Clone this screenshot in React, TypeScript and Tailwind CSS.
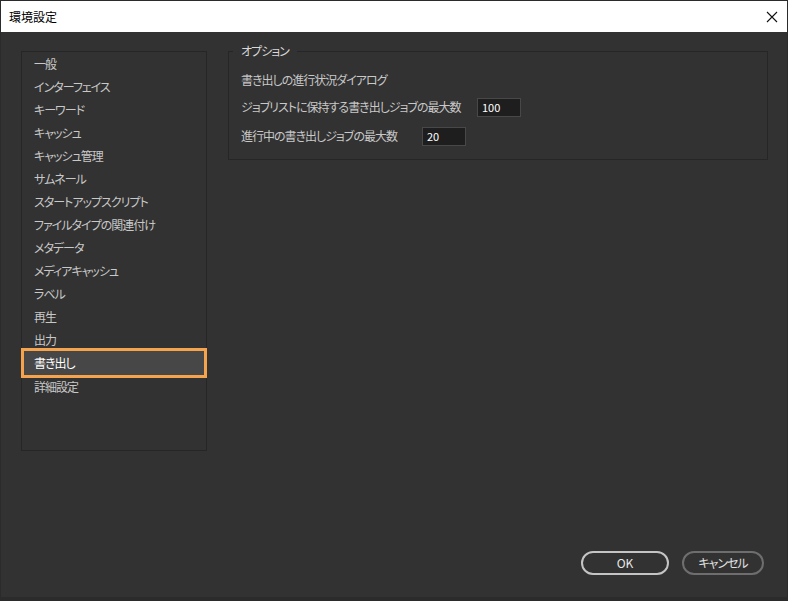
import React from "react";

const items = [
  "一般",
  "インターフェイス",
  "キーワード",
  "キャッシュ",
  "キャッシュ管理",
  "サムネール",
  "スタートアップスクリプト",
  "ファイルタイプの関連付け",
  "メタデータ",
  "メディアキャッシュ",
  "ラベル",
  "再生",
  "出力",
  "書き出し",
  "詳細設定",
];

export default function App() {
  return (
    <div
      className="w-[788px] h-[601px] bg-[#2b2b2b] flex flex-col overflow-hidden text-[12px] [font-feature-settings:'palt'] whitespace-nowrap"
      style={{ fontFamily: '"Noto Sans CJK JP", "Noto Sans", sans-serif' }}
    >
      <div className="mt-[1px] mx-[1px] h-[31px] bg-white flex items-center justify-between pl-[8px] pr-[9px] text-black">
        <span className="text-[12px]">環境設定</span>
        <svg width="12" height="12" viewBox="0 0 12 12">
          <path d="M1 1 L11 11 M11 1 L1 11" stroke="#111" strokeWidth="1.1" />
        </svg>
      </div>
      <div className="flex-1 bg-[#323232] flex flex-col mx-[1px] mb-[4px] tracking-[-1px]">
        <div className="flex pt-[19px] pl-[20px]">
          <div className="w-[186px] h-[400px] border border-[#262626] shrink-0">
            {items.map((t) =>
              t === "書き出し" ? (
                <div
                  key={t}
                  className="h-[30px] -ml-[1px] -mr-[1px] my-[-3px] border-[3px] border-[#f5a34c] bg-[#474747] text-white flex items-center pl-[10px]"
                >
                  {t}
                </div>
              ) : (
                <div key={t} className="h-[23px] flex items-center pl-[12px] text-[#c8c8c8]">
                  {t}
                </div>
              )
            )}
          </div>
          <div className="ml-[21px] w-[540px] h-[109px] border border-[#262626] relative shrink-0">
            <div className="absolute -top-[9px] left-[4px] bg-[#323232] px-[8px] text-[#d8d8d8] leading-[16px]">
              オプション
            </div>
            <div className="pt-[18px] pl-[12px] flex flex-col text-[#c8c8c8]">
              <div className="h-[20px] flex items-center">書き出しの進行状況ダイアログ</div>
              <div className="mt-[7px] h-[20px] flex items-center">
                <span className="w-[236px] shrink-0">ジョブリストに保持する書き出しジョブの最大数</span>
                <div className="w-[44px] h-[19px] bg-[#1e1e1e] border border-[#484848] flex items-center pl-[4px] text-white text-[11px] tracking-normal">
                  100
                </div>
              </div>
              <div className="mt-[9px] h-[20px] flex items-center">
                <span className="w-[181px] shrink-0">進行中の書き出しジョブの最大数</span>
                <div className="w-[44px] h-[19px] bg-[#1e1e1e] border border-[#484848] flex items-center pl-[4px] text-white text-[11px] tracking-normal">
                  20
                </div>
              </div>
            </div>
          </div>
        </div>
        <div className="flex-1" />
        <div className="flex justify-end gap-[13px] pr-[23px] pb-[22px]">
          <button className="w-[88px] h-[24px] rounded-full border-2 border-[#c4c4c4] text-[#e8e8e8] text-[12px] tracking-normal flex items-center justify-center">
            OK
          </button>
          <button className="w-[82px] h-[24px] rounded-full border-2 border-[#6e6e6e] text-[#e0e0e0] text-[12px] flex items-center justify-center">
            キャンセル
          </button>
        </div>
      </div>
    </div>
  );
}
